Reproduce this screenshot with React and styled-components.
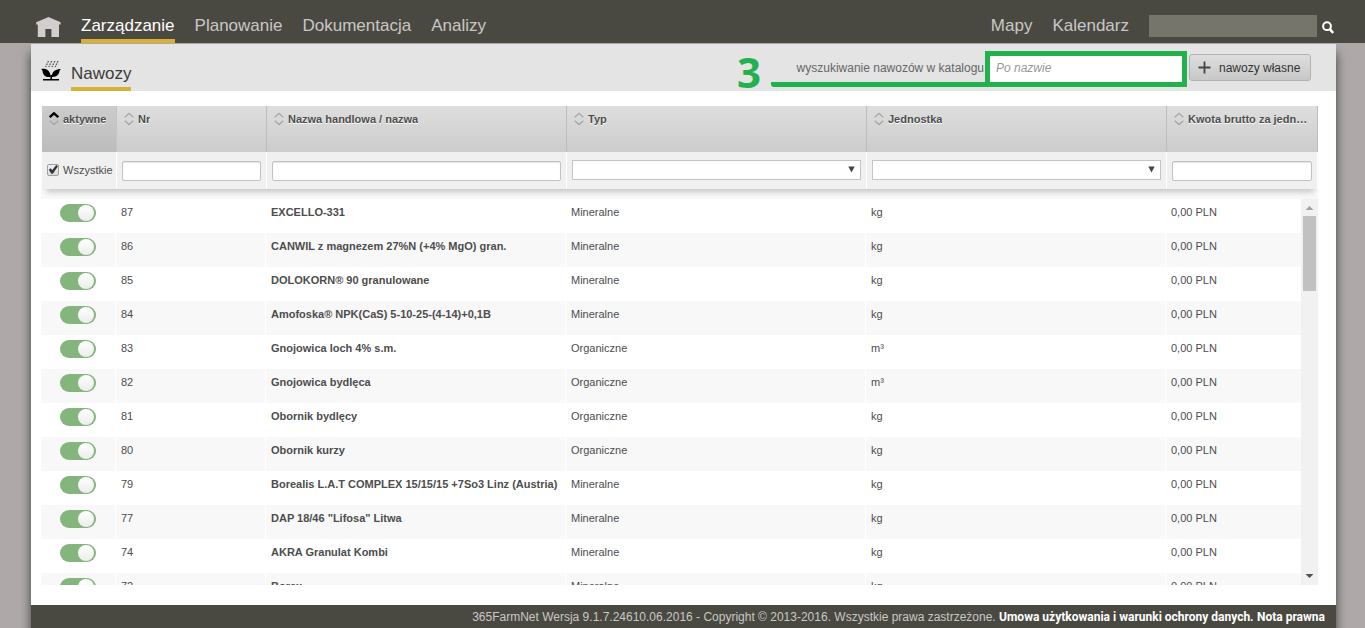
import React from "react";
import styled, { createGlobalStyle, css } from "styled-components";

const GlobalStyle = createGlobalStyle`
  *, *::before, *::after { box-sizing: border-box; }
  body {
    margin: 0;
    background: #aea9a8;
    font-family: "Liberation Sans", Arial, sans-serif;
    font-size: 11px;
    color: #4d4d4d;
  }
  input, select, button { font: inherit; color: inherit; margin: 0; }
  a { text-decoration: none; color: inherit; }
`;

const AppShell = styled.div`
  display: flex;
  flex-direction: column;
  height: 100vh;
  min-width: 1100px;
  overflow: hidden;
`;

const TopBar = styled.header`
  display: flex;
  align-items: flex-end;
  gap: 20px;
  flex: none;
  height: 43px;
  padding: 0 31px 0 36px;
  background: #4a4941;
`;

const HomeLink = styled.a`
  display: block;
  height: 26px;
  svg { display: block; }
`;

const Nav = styled.nav`
  display: flex;
  gap: 20px;
`;

const NavLink = styled.a`
  height: 28px;
  padding-top: 1px;
  font-size: 17px;
  line-height: 20px;
  color: ${(p) => (p.$active ? "#ffffff" : "#c9c7c5")};
  border-bottom: 4px solid ${(p) => (p.$active ? "#d8b034" : "transparent")};
`;

const Spacer = styled.div`
  flex: 1;
`;

const GlobalSearch = styled.form`
  display: flex;
  align-items: center;
  gap: 5px;
  height: 28px;
  padding-bottom: 6px;
`;

const GlobalSearchInput = styled.input`
  width: 168px;
  height: 22px;
  border: 0;
  padding: 0 6px;
  background: #76756c;
  color: #fff;
`;

const IconButton = styled.button`
  padding: 2px 0 0;
  border: 0;
  background: none;
  line-height: 0;
`;

const Panel = styled.main`
  flex: 1;
  min-height: 0;
  display: flex;
  flex-direction: column;
  margin: 0 29px 0 31px;
  background: #fff;
  border-top: 1px solid #aea9a8;
  box-shadow: 0 10px 10px rgba(0, 0, 0, 0.65);
  clip-path: inset(0 -30px);
`;

const SubHeader = styled.div`
  display: flex;
  align-items: flex-start;
  flex: none;
  height: 47px;
  padding: 0 25px 0 10px;
  background: #e4e4e4;
`;

const PlantIcon = styled.svg`
  margin: 16px 10px 0 0;
`;

const PageTitle = styled.h1`
  height: 47px;
  margin: 0;
  padding-top: 20px;
  font-size: 17px;
  font-weight: 400;
  line-height: 20px;
  color: #3b3b3b;
  border-bottom: 4px solid #d8b034;
`;

const StepNumber = styled.strong`
  margin: 2px 10px 0 0;
  font: 700 42px/52px "Open Sans", sans-serif;
  color: #22b14c;
`;

const CatalogSearch = styled.div`
  display: flex;
  height: 36px;
  margin: 7px 2px 0 0;
`;

const SearchLabel = styled.label`
  width: 214px;
  padding: 9px 1px 0 0;
  border-bottom: 5px solid #22b14c;
  border-bottom-left-radius: 3px;
  font-size: 12px;
  line-height: 16px;
  text-align: right;
  color: #666;
`;

const CatalogInput = styled.input`
  width: 202px;
  padding: 0 6px 2px;
  border: 5px solid #22b14c;
  background: #fff;
  font-size: 12px;
  &::placeholder { color: #999; font-style: italic; opacity: 1; }
`;

const AddButton = styled.button`
  display: flex;
  align-items: center;
  gap: 8px;
  height: 27px;
  width: 122px;
  margin-top: 10px;
  padding: 0 8px;
  border: 1px solid #b2b2b2;
  border-radius: 3px;
  background: linear-gradient(#dedede, #c8c8c8);
  font-size: 12px;
  white-space: nowrap;
  color: #333;
`;

const Content = styled.section`
  flex: 1;
  min-height: 0;
  display: flex;
  flex-direction: column;
  padding: 15px 18px 20px 10px;
`;

const gridTable = css`
  width: 100%;
  table-layout: fixed;
  border-collapse: separate;
  border-spacing: 0;
`;

const HeadWrap = styled.div`
  position: relative;
  z-index: 1;
  flex: none;
  padding-left: 1px;
`;

const HeadTable = styled.table`
  ${gridTable}
  box-shadow: 0 7px 6px -4px rgba(0, 0, 0, 0.2);
`;

const HeadCell = styled.th`
  height: 46px;
  padding: 6px 6px 0 7px;
  vertical-align: top;
  text-align: left;
  line-height: 14px;
  white-space: nowrap;
  overflow: hidden;
  text-shadow: 0 1px 0 #fff;
  border-right: 1px solid ${(p) => (p.$sorted ? "#c4c4c4" : "#bdbdbd")};
  background: ${(p) =>
    p.$sorted
      ? "linear-gradient(#cccccc, #bcbcbc)"
      : "linear-gradient(#dedede, #cccccc)"};
`;

const HeadLabel = styled.div`
  display: flex;
  align-items: center;
  gap: 4px;
  svg { flex: none; }
  span { overflow: hidden; text-overflow: ellipsis; }
`;

const FilterCell = styled.td`
  height: 37px;
  padding: 0 5px;
  border-right: 1px solid #fff;
  background: #f0f0f0;
`;

const CheckLabel = styled.label`
  display: flex;
  align-items: center;
  gap: 4px;
  padding-bottom: 2px;
  line-height: 14px;
`;

const CheckBox = styled.input`
  appearance: none;
  flex: none;
  width: 12px;
  height: 12px;
  border: 1px solid #a0a0a0;
  border-radius: 2px;
  background: linear-gradient(#eee, #dcdcdc);
  &:checked::after {
    content: "";
    display: block;
    width: 10px;
    height: 10px;
    background: #333;
    clip-path: polygon(8% 52%, 28% 38%, 42% 58%, 82% 4%, 100% 18%, 48% 92%, 34% 92%);
  }
`;

const FilterInput = styled.input`
  display: block;
  width: 100%;
  height: 20px;
  margin-top: 1px;
  padding: 0 4px;
  border: 1px solid #c2c2c2;
  border-radius: 2px;
  background: #fff;
  box-shadow: inset 0 1px 1px #e4e4e4;
`;

const SelectWrap = styled.div`
  display: grid;
  align-items: center;
  height: 20px;
  margin-bottom: 2px;
  > * { grid-area: 1 / 1; }
  svg { justify-self: end; margin-right: 6px; pointer-events: none; }
`;

const FilterSelect = styled.select`
  appearance: none;
  width: 100%;
  height: 20px;
  padding: 0 4px;
  border: 1px solid #c4c4c4;
  border-radius: 0;
  background: #fff;
`;

const HeadGap = styled.div`
  flex: none;
  height: 10px;
  background: #f8f8f8;
`;

const ScrollArea = styled.div`
  flex: 1;
  min-height: 0;
  display: flex;
`;

const RowsViewport = styled.div`
  flex: 1;
  overflow: hidden;
`;

const RowsTable = styled.table`
  ${gridTable}
`;

const Row = styled.tr`
  background: #fff;
  &:nth-child(even) { background: #f8f8f8; }
`;

const Cell = styled.td`
  height: 34px;
  padding: ${(p) => (p.$toggle ? "5px 0 0 19px" : "6px 5px 0")};
  border-right: 1px solid #fff;
  vertical-align: top;
  line-height: 14px;
  font-weight: ${(p) => (p.$bold ? 700 : 400)};
  white-space: nowrap;
  &:last-child { border-right: 0; }
`;

const Toggle = styled.input`
  appearance: none;
  display: block;
  width: 36px;
  height: 18px;
  padding: 1px;
  border-radius: 9px;
  background: #b5b5b5;
  &::after {
    content: "";
    display: block;
    width: 16px;
    height: 16px;
    border-radius: 50%;
    background: linear-gradient(#ffffff, #ececec);
  }
  &:checked { background: #84b57c; }
  &:checked::after { margin-left: 17px; }
`;

const ScrollBar = styled.div`
  flex: none;
  display: flex;
  flex-direction: column;
  align-items: center;
  width: 17px;
  background: #f1f1f1;
`;

const ScrollArrow = styled.svg`
  flex: none;
  display: block;
`;

const ScrollThumb = styled.div`
  width: 13px;
  height: 75px;
  margin-bottom: auto;
  background: #c1c1c1;
`;

const Footer = styled.footer`
  flex: none;
  height: 23px;
  padding: 0 11px 0 0;
  background: #4a4941;
  font-size: 12px;
  line-height: 24px;
  text-align: right;
  white-space: nowrap;
  color: #c9c7c5;
  a { color: #fff; font-family: Roboto, sans-serif; font-weight: 700; }
`;

const SortIcon = ({ up }) => (
  <svg width="10" height="14" viewBox="0 0 10 14" fill="none" aria-hidden="true">
    <path d="M0.7 5.2 5 1.3 9.3 5.2" stroke={up ? "#000" : "#a6a6a6"} strokeWidth={up ? 2.4 : 1.3} />
    <path d="M0.7 8.8 5 12.6 9.3 8.8" stroke="#a6a6a6" strokeWidth="1.3" />
  </svg>
);

const COLUMNS = [
  { key: "active", label: "aktywne", sorted: true },
  { key: "nr", label: "Nr", filter: "text" },
  { key: "name", label: "Nazwa handlowa / nazwa", filter: "text" },
  { key: "type", label: "Typ", filter: "select" },
  { key: "unit", label: "Jednostka", filter: "select" },
  { key: "price", label: "Kwota brutto za jednostkę", filter: "text" },
];

const ROWS = [
  [87, "EXCELLO-331", "Mineralne", "kg"],
  [86, "CANWIL z magnezem 27%N (+4% MgO) gran.", "Mineralne", "kg"],
  [85, "DOLOKORN® 90 granulowane", "Mineralne", "kg"],
  [84, "Amofoska® NPK(CaS) 5-10-25-(4-14)+0,1B", "Mineralne", "kg"],
  [83, "Gnojowica loch 4% s.m.", "Organiczne", "m³"],
  [82, "Gnojowica bydlęca", "Organiczne", "m³"],
  [81, "Obornik bydlęcy", "Organiczne", "kg"],
  [80, "Obornik kurzy", "Organiczne", "kg"],
  [79, "Borealis L.A.T COMPLEX 15/15/15 +7So3 Linz (Austria)", "Mineralne", "kg"],
  [77, 'DAP 18/46 "Lifosa" Litwa', "Mineralne", "kg"],
  [74, "AKRA Granulat Kombi", "Mineralne", "kg"],
  [72, "Borax", "Mineralne", "kg"],
];

const Columns = () => (
  <colgroup>
    <col width="75" />
    <col width="150" />
    <col width="300" />
    <col width="300" />
    <col width="300" />
    <col />
  </colgroup>
);

const Filter = ({ column }) => {
  if (column.filter === "select") {
    return (
      <SelectWrap>
        <FilterSelect aria-label={column.label} defaultValue="">
          <option value=""></option>
        </FilterSelect>
        <svg width="7" height="7" viewBox="0 0 7 7" aria-hidden="true">
          <path d="M0.3 0.5H6.7L3.5 6.5Z" fill="#444" />
        </svg>
      </SelectWrap>
    );
  }
  if (column.filter === "text") {
    return <FilterInput type="text" aria-label={column.label} />;
  }
  return (
    <CheckLabel>
      <CheckBox type="checkbox" defaultChecked />
      Wszystkie
    </CheckLabel>
  );
};

export default function App() {
  return (
    <AppShell>
      <GlobalStyle />
      <TopBar>
        <HomeLink href="#" aria-label="Start">
          <svg width="25" height="20" viewBox="0 0 25 20">
            <path d="M12.5 0 24.6 5.2V7.6H23V20H15.4V12H9.4V20H1.8V7.6H0.2V5.2Z" fill="#d2cecd" />
          </svg>
        </HomeLink>
        <Nav>
          <NavLink href="#" $active>Zarządzanie</NavLink>
          <NavLink href="#">Planowanie</NavLink>
          <NavLink href="#">Dokumentacja</NavLink>
          <NavLink href="#">Analizy</NavLink>
        </Nav>
        <Spacer />
        <Nav>
          <NavLink href="#">Mapy</NavLink>
          <NavLink href="#">Kalendarz</NavLink>
        </Nav>
        <GlobalSearch>
          <GlobalSearchInput type="search" aria-label="Szukaj" />
          <IconButton type="button" aria-label="Szukaj">
            <svg width="12" height="13" viewBox="0 0 12 13" fill="none" stroke="#fff">
              <circle cx="5" cy="5.2" r="3.9" strokeWidth="2" />
              <path d="M7.8 8.2 11.2 12" strokeWidth="2.6" />
            </svg>
          </IconButton>
        </GlobalSearch>
      </TopBar>

      <Panel>
        <SubHeader>
          <PlantIcon width="20" height="21" viewBox="0 0 20 21" aria-hidden="true">
            <g stroke="#555" strokeWidth="1.3" strokeDasharray="1.6 1.1">
              <path d="M7.4 1 4.6 7M10.6 1 7.8 7M13.8 1 11 7M17 1 14.2 7" />
            </g>
            <path d="M0 9C5 8 9.2 10 9.8 17 4.5 17.6 1.8 14.5 1.6 11.4 1.5 10.4 1 9.6 0 9Z" fill="#000" />
            <path d="M20 9C15 9 11 11 10.6 17 15.5 17.4 18 14.6 18.4 11.6 18.6 10.4 19 9.6 20 9Z" fill="#000" />
            <path d="M9.4 15H11V19.2H9.4ZM2 19H18V20.6H2Z" fill="#000" />
          </PlantIcon>
          <PageTitle>Nawozy</PageTitle>
          <Spacer />
          <StepNumber>3</StepNumber>
          <CatalogSearch>
            <SearchLabel htmlFor="catalog-search">wyszukiwanie nawozów w katalogu</SearchLabel>
            <CatalogInput id="catalog-search" type="text" placeholder="Po nazwie" />
          </CatalogSearch>
          <AddButton type="button">
            <svg width="13" height="13" viewBox="0 0 13 13" aria-hidden="true">
              <path d="M6.5 0.5V12.5M0.5 6.5H12.5" stroke="#444" strokeWidth="1.8" />
            </svg>
            nawozy własne
          </AddButton>
        </SubHeader>

        <Content>
          <HeadWrap>
            <HeadTable>
              <Columns />
              <thead>
                <tr>
                  {COLUMNS.map((c) => (
                    <HeadCell key={c.key} $sorted={c.sorted} scope="col">
                      <HeadLabel>
                        <SortIcon up={c.sorted} />
                        <span>{c.label}</span>
                      </HeadLabel>
                    </HeadCell>
                  ))}
                </tr>
              </thead>
              <tbody>
                <tr>
                  {COLUMNS.map((c) => (
                    <FilterCell key={c.key}>
                      <Filter column={c} />
                    </FilterCell>
                  ))}
                </tr>
              </tbody>
            </HeadTable>
          </HeadWrap>
          <HeadGap />
          <ScrollArea>
            <RowsViewport>
              <RowsTable>
                <Columns />
                <tbody>
                  {ROWS.map(([nr, name, type, unit]) => (
                    <Row key={nr}>
                      <Cell $toggle>
                        <Toggle type="checkbox" defaultChecked aria-label={name} />
                      </Cell>
                      <Cell>{nr}</Cell>
                      <Cell $bold>{name}</Cell>
                      <Cell>{type}</Cell>
                      <Cell>{unit}</Cell>
                      <Cell>0,00 PLN</Cell>
                    </Row>
                  ))}
                </tbody>
              </RowsTable>
            </RowsViewport>
            <ScrollBar>
              <ScrollArrow width="17" height="17" viewBox="0 0 17 17">
                <path d="M4.5 11H12.5L8.5 7Z" fill="#a3a3a3" />
              </ScrollArrow>
              <ScrollThumb />
              <ScrollArrow width="17" height="17" viewBox="0 0 17 17">
                <path d="M4.5 6H12.5L8.5 10Z" fill="#505050" />
              </ScrollArrow>
            </ScrollBar>
          </ScrollArea>
        </Content>

        <Footer>
          365FarmNet Wersja 9.1.7.24610.06.2016 - Copyright © 2013-2016. Wszystkie prawa zastrzeżone.{" "}
          <a href="#">Umowa użytkowania i warunki ochrony danych.</a> <a href="#">Nota prawna</a>
        </Footer>
      </Panel>
    </AppShell>
  );
}
